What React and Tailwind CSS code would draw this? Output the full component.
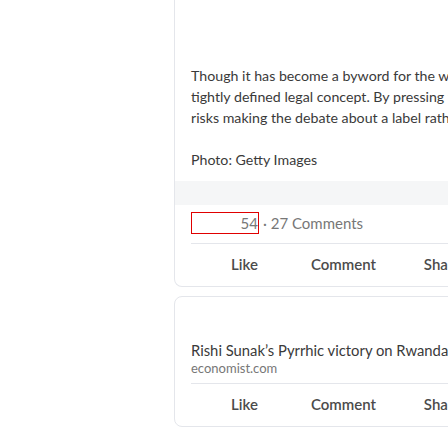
import React from 'react'

const font = { fontFamily: 'Lato, "Open Sans", sans-serif' }

const Actions = () => (
  <div className="border-t border-[#e4e6eb]">
    <div className="ml-1 grid w-[297px] grid-cols-3 h-[42px] items-center text-[15px] font-semibold text-[#4b4b4b]">
      <div className="text-center">Like</div>
      <div className="text-center">Comment</div>
      <div className="text-center">Share</div>
    </div>
  </div>
)

const lines = [
  'Though it has become a byword for the worst of crimes, genocide is a',
  'tightly defined legal concept. By pressing the charge, South Africa',
  'risks making the debate about a label rather than about the suffering',
]

export default function App() {
  return (
    <div className="h-[448px] overflow-hidden bg-white pl-[174px]" style={font}>
      <div className="w-[334px]">
        <div className="rounded-b-lg border border-t-0 border-[#e4e6eb] bg-white">
          <div className="px-4 pt-[65px] text-[14.2px] leading-[21px] text-[#3a3a3a]">
            {lines.map((l) => (
              <p key={l} className="whitespace-nowrap">{l}</p>
            ))}
            <p className="h-[21px]" />
            <p>Photo: Getty Images</p>
          </div>
          <div className="mt-[11px] h-[24px] bg-[#f5f6f7]" />
          <div className="px-4">
            <div className="flex items-center pt-[7px] pb-2 text-[15px] text-[#777]">
              <span className="flex h-[22px] w-[68px] items-center justify-end border border-[#e00000]">54</span>
              <span className="ml-1">· 27 Comments</span>
            </div>
            <Actions />
          </div>
        </div>
        <div className="mt-[9px] rounded-lg border border-[#e4e6eb] bg-white px-4 pt-[43px]">
          <p className="whitespace-nowrap text-[14.8px] leading-[20px] text-[#3a3a3a]">Rishi Sunak’s Pyrrhic victory on Rwanda</p>
          <p className="pb-[7px] text-[13px] leading-[16px] text-[#777]">economist.com</p>
          <Actions />
        </div>
      </div>
    </div>
  )
}
